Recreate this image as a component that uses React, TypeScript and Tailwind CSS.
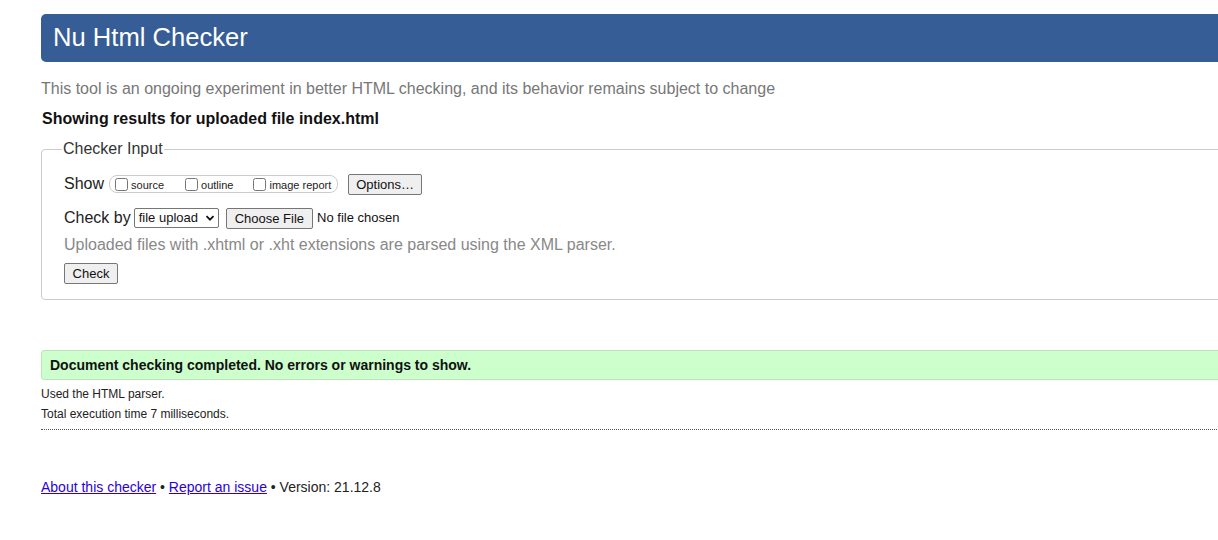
export default function App() {
  return (
    <div className="w-[1218px] h-[540px] overflow-hidden bg-white font-['Liberation_Sans',Arial,sans-serif] text-[#111]">
      <div className="ml-[41px] w-[1230px] pt-[14px]">
        {/* header */}
        <h1 className="h-[48px] bg-[#365d95] rounded-[5px] pl-[12px] flex items-center text-white text-[25.6px] leading-none">
          Nu Html Checker
        </h1>

        <p className="mt-[17px] text-[16px] leading-[20px] text-[#777]">
          This tool is an ongoing experiment in better HTML checking, and its behavior remains subject to change
        </p>
        <p className="mt-[10px] ml-[1px] text-[16px] leading-[20px] font-bold text-[#111]">
          Showing results for uploaded file index.html
        </p>

        {/* checker input */}
        <fieldset className="mt-[11px] border border-[#ccc] rounded-[4px] h-[160px] pl-[22px] pr-4">
          <legend className="ml-[-2px] px-[1px] text-[16px] leading-[18px] text-[#333]">Checker Input</legend>

          <div className="mt-[15px] flex items-center h-[22px]">
            <span className="text-[16px] text-[#222]">Show</span>
            <div className="ml-[5px] flex items-center h-[18px] border border-[#ccc] rounded-[8px] pl-[5px] pr-[6px] text-[11px] text-[#222]">
              <label className="flex items-center">
                <input type="checkbox" className="w-[13px] h-[13px] mr-[3px]" />
                <span className="mt-[3px]">source</span>
              </label>
              <label className="flex items-center ml-[21px]">
                <input type="checkbox" className="w-[13px] h-[13px] mr-[3px]" />
                <span className="mt-[3px]">outline</span>
              </label>
              <label className="flex items-center ml-[20px]">
                <input type="checkbox" className="w-[13px] h-[13px] mr-[3px]" />
                <span className="mt-[3px]">image report</span>
              </label>
            </div>
            <button className="ml-[10px] h-[21px] px-[7px] text-[13px] text-[#111] bg-[#efefef] border border-[#767676] rounded-[2px]">
              Options…
            </button>
          </div>

          <div className="mt-[12px] flex items-center h-[22px]">
            <span className="text-[16px] text-[#222]">Check by</span>
            <div className="ml-[3px] h-[20px] w-[85px] flex items-center justify-between border border-[#767676] rounded-[2px] pl-[4px] pr-[3px] text-[13px] text-[#111]">
              <span>file upload</span>
              <svg width="10" height="10" viewBox="0 0 10 10">
                <path d="M1.5 3.2 L5 6.7 L8.5 3.2" fill="none" stroke="#111" strokeWidth="1.8" />
              </svg>
            </div>
            <button className="ml-[7px] h-[21px] px-[8px] text-[13px] text-[#111] bg-[#efefef] border border-[#767676] rounded-[2px]">
              Choose File
            </button>
            <span className="ml-[4px] text-[13px] text-[#111]">No file chosen</span>
          </div>

          <p className="mt-[6px] text-[16px] leading-[20px] text-[#888]">
            Uploaded files with .xhtml or .xht extensions are parsed using the XML parser.
          </p>

          <button className="mt-[8px] h-[21px] w-[54px] text-[13px] text-[#111] bg-[#efefef] border border-[#767676] rounded-[2px]">
            Check
          </button>
        </fieldset>

        {/* results */}
        <div className="mt-[50px] h-[30px] bg-[#ccffcc] border border-[#bde3bd] rounded-[3px] pl-[8px] flex items-center text-[14px] font-bold text-[#111]">
          Document checking completed. No errors or warnings to show.
        </div>
        <p className="mt-[7px] text-[12px] leading-[14px] text-[#222]">Used the HTML parser.</p>
        <p className="mt-[6px] text-[12px] leading-[14px] text-[#222]">Total execution time 7 milliseconds.</p>
        <div className="mt-[8px] border-t border-dotted border-[#555]" />

        {/* footer */}
        <p className="mt-[49px] text-[14px] leading-[16px] text-[#222]">
          <a href="#" className="underline text-[#2a00dd]">About this checker</a>
          {" • "}
          <a href="#" className="underline text-[#2a00dd]">Report an issue</a>
          {" • Version: 21.12.8"}
        </p>
      </div>
    </div>
  );
}
